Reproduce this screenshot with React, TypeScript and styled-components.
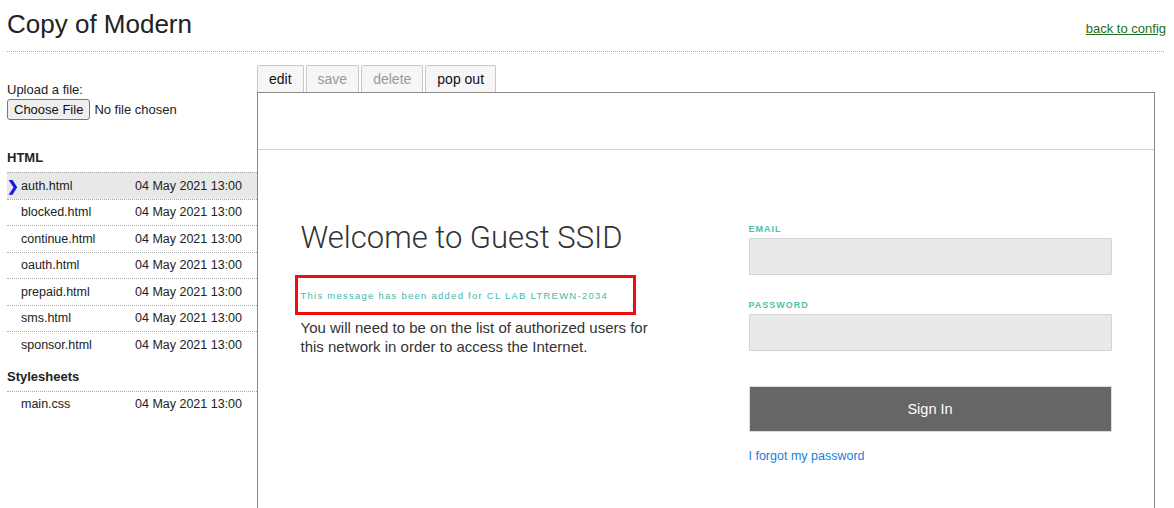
import React from "react";
import styled, { createGlobalStyle } from "styled-components";

const GlobalStyle = createGlobalStyle`
  body {
    margin: 0;
    padding: 0 8px 0 7px;
    font-family: "Liberation Sans", Arial, sans-serif;
    color: #222;
    background: #fff;
    overflow: hidden;
  }
`;

const files = [
  { name: "auth.html", date: "04 May 2021 13:00", active: true },
  { name: "blocked.html", date: "04 May 2021 13:00" },
  { name: "continue.html", date: "04 May 2021 13:00" },
  { name: "oauth.html", date: "04 May 2021 13:00" },
  { name: "prepaid.html", date: "04 May 2021 13:00" },
  { name: "sms.html", date: "04 May 2021 13:00" },
  { name: "sponsor.html", date: "04 May 2021 13:00" },
];

const sheets = [{ name: "main.css", date: "04 May 2021 13:00" }];

function App() {
  return (
    <>
      <GlobalStyle />
      <Header>
        <Title>Copy of Modern</Title>
        <BackLink href="#">back to config</BackLink>
      </Header>
      <Body>
        <Sidebar>
          <Upload>
            <div>Upload a file:</div>
            <FileRow>
              <ChooseButton>Choose File</ChooseButton>
              <span>No file chosen</span>
            </FileRow>
          </Upload>
          <GroupTitle>HTML</GroupTitle>
          <FileList>
            {files.map((f) => (
              <FileItem key={f.name} $active={!!f.active}>
                <Marker>{f.active ? "❯" : ""}</Marker>
                <FileName>{f.name}</FileName>
                <FileDate>{f.date}</FileDate>
              </FileItem>
            ))}
          </FileList>
          <GroupTitle>Stylesheets</GroupTitle>
          <FileList>
            {sheets.map((f) => (
              <FileItem key={f.name} $active={false}>
                <Marker />
                <FileName>{f.name}</FileName>
                <FileDate>{f.date}</FileDate>
              </FileItem>
            ))}
          </FileList>
        </Sidebar>
        <Main>
          <Tabs>
            <Tab>edit</Tab>
            <Tab disabled>save</Tab>
            <Tab disabled>delete</Tab>
            <Tab>pop out</Tab>
          </Tabs>
          <Preview>
            <PortalHeader />
            <PortalBody>
              <Intro>
                <Welcome>Welcome to Guest SSID</Welcome>
                <Notice>This message has been added for CL LAB LTREWN-2034</Notice>
                <Lead>
                  You will need to be on the list of authorized users for this
                  network in order to access the Internet.
                </Lead>
              </Intro>
              <Form>
                <Field>
                  <Label>EMAIL</Label>
                  <Input />
                </Field>
                <Field>
                  <Label>PASSWORD</Label>
                  <Input type="password" />
                </Field>
                <SignIn>Sign In</SignIn>
                <Forgot href="#">I forgot my password</Forgot>
              </Form>
            </PortalBody>
          </Preview>
        </Main>
      </Body>
    </>
  );
}

export default App;

const Header = styled.header`
  display: flex;
  justify-content: space-between;
  align-items: flex-end;
  padding: 9px 0 12px;
  border-bottom: 1px dotted #aaa;
  margin-right: 2px;
`;

const Title = styled.h1`
  margin: 0;
  font-size: 26px;
  font-weight: 400;
  color: #222;
  line-height: 30px;
`;

const BackLink = styled.a`
  font-size: 13px;
  color: #1d6e1d;
  margin-right: -2px;
  line-height: 16px;
  padding-bottom: 2px;
`;

const Body = styled.div`
  display: flex;
  padding-top: 13px;
`;

const Sidebar = styled.aside`
  width: 250px;
  flex-shrink: 0;
  font-size: 13px;
`;

const Upload = styled.div`
  padding-top: 17px;
  line-height: 16px;
  margin-bottom: 30px;
`;

const FileRow = styled.div`
  display: flex;
  align-items: center;
  gap: 4px;
  margin-top: 1px;
`;

const ChooseButton = styled.button`
  font-family: "Liberation Sans", Arial, sans-serif;
  font-size: 13px;
  padding: 2px 6px;
  height: 21px;
  background: #efefef;
  border: 1px solid #767676;
  border-radius: 3px;
  color: #111;
`;

const GroupTitle = styled.h3`
  margin: 0;
  font-size: 13px;
  font-weight: 700;
  line-height: 16px;
  padding-bottom: 6px;
`;

const FileList = styled.ul`
  list-style: none;
  margin: 0 0 11px;
  padding: 0;
`;

const FileItem = styled.li<{ $active: boolean }>`
  display: flex;
  align-items: center;
  height: 26.5px;
  border-top: 1px dotted #aaa;
  box-sizing: border-box;
  background: ${(p) => (p.$active ? "#e8e8e8" : "transparent")};
  font-size: 12.5px;
`;

const Marker = styled.span`
  width: 14px;
  color: #1515e6;
  font-weight: 700;
  font-size: 14px;
`;

const FileName = styled.span`
  width: 114px;
  color: #222;
`;

const FileDate = styled.span`
  color: #222;
`;

const Main = styled.div`
  flex: none;
  width: 898px;
  display: flex;
  flex-direction: column;
`;

const Tabs = styled.div`
  display: flex;
  gap: 2px;
`;

const Tab = styled.button`
  font-family: "Liberation Sans", Arial, sans-serif;
  font-size: 14px;
  height: 27px;
  padding: 0 11px;
  background: #f6f6f6;
  border: 1px solid #c8c8c8;
  border-bottom: none;
  border-radius: 2px 2px 0 0;
  color: ${(p) => (p.disabled ? "#999" : "#111")};
`;

const Preview = styled.div`
  border: 1px solid #888;
  height: 430px;
  box-sizing: border-box;
`;

const PortalHeader = styled.div`
  height: 56px;
  border-bottom: 1px solid #d0d0d0;
`;

const PortalBody = styled.div`
  width: 811px;
  margin: 0 auto;
  display: flex;
  justify-content: space-between;
  padding-top: 71px;
  font-family: Roboto, "Liberation Sans", sans-serif;
`;

const Intro = styled.div`
  width: 360px;
`;

const Welcome = styled.h2`
  margin: 0;
  font-size: 31px;
  font-weight: 300;
  color: #333;
  line-height: 34px;
`;

const Notice = styled.div`
  margin: 20px 0 0 -6px;
  width: 341px;
  height: 40px;
  border: 3px solid #f00d0d;
  box-sizing: border-box;
  padding-left: 3px;
  display: flex;
  align-items: center;
  font-family: "Liberation Sans", Arial, sans-serif;
  font-size: 9.5px;
  letter-spacing: 1.25px;
  white-space: nowrap;
  color: #3fb8a9;
`;

const Lead = styled.p`
  margin: 3px 0 0;
  font-family: "Liberation Sans", Arial, sans-serif;
  font-size: 15px;
  line-height: 19px;
  color: #333;
`;

const Form = styled.div`
  width: 363px;
  display: flex;
  flex-direction: column;
  padding-top: 2px;
`;

const Field = styled.div`
  display: flex;
  flex-direction: column;
  margin-bottom: 24px;
`;

const Label = styled.label`
  font-family: "Liberation Sans", Arial, sans-serif;
  font-size: 9px;
  font-weight: 700;
  letter-spacing: 1px;
  color: #4dbfae;
  line-height: 12px;
  margin-bottom: 3px;
`;

const Input = styled.input`
  height: 37px;
  box-sizing: border-box;
  background: #e9e9e9;
  border: 1px solid #d4d4d4;
  border-radius: 1px;
`;

const SignIn = styled.button`
  margin-top: 11px;
  height: 46px;
  background: #666;
  border: 1px solid #ddd;
  color: #fff;
  font-family: "Liberation Sans", Arial, sans-serif;
  font-size: 14.5px;
`;

const Forgot = styled.a`
  margin-top: 17px;
  font-family: "Liberation Sans", Arial, sans-serif;
  font-size: 12.5px;
  color: #1b7fd6;
  text-decoration: none;
`;
